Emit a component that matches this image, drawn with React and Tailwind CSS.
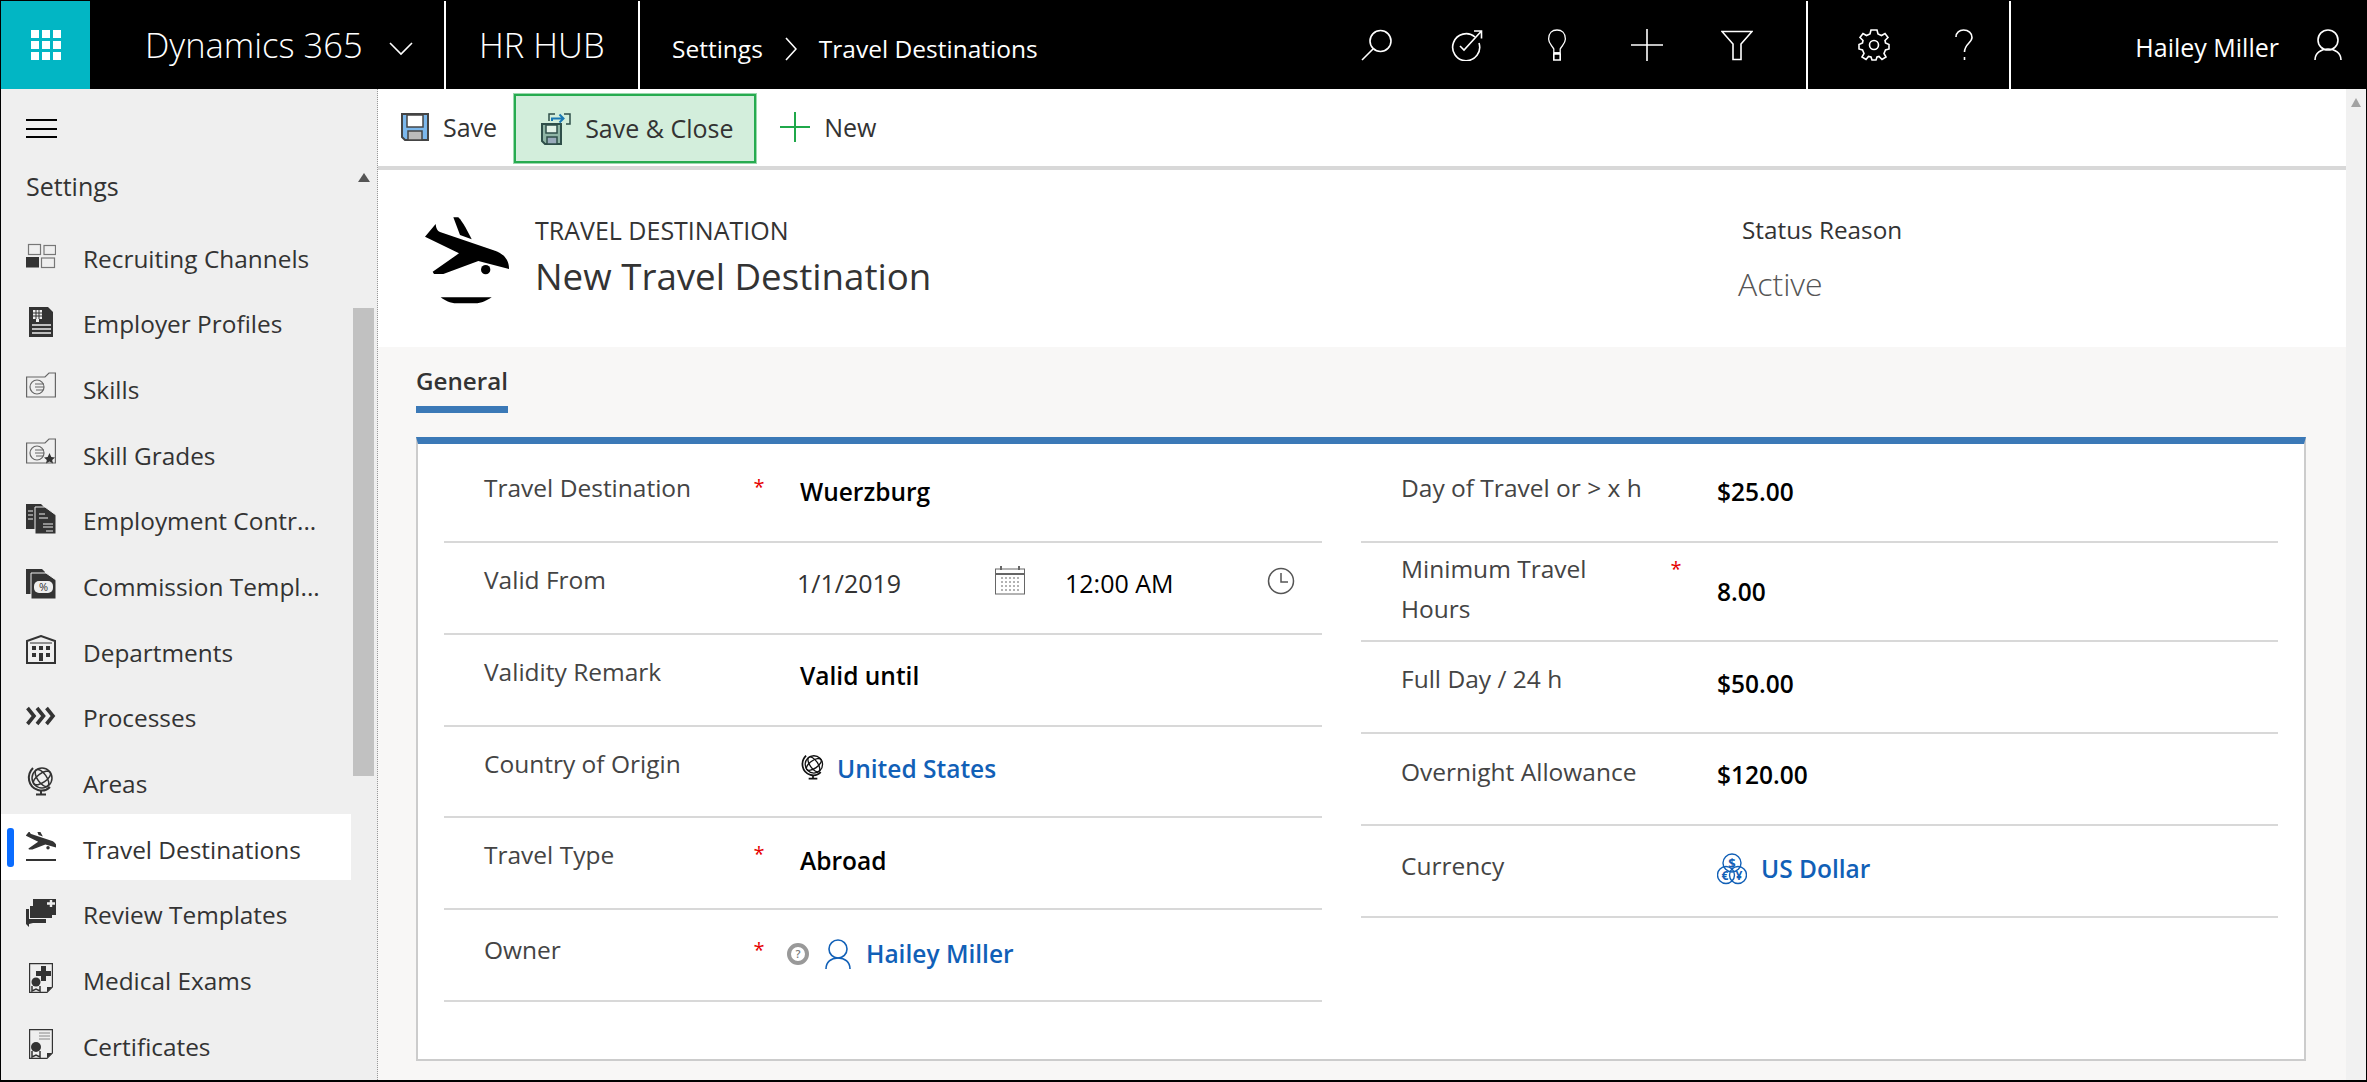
import React from 'react';

const font = { fontFamily: '"Open Sans", "Noto Sans", sans-serif' };

function PlaneShape() {
  return (
    <>
      <path d="M77 72 L45 110 L147 160 L68 215 L72 222 L100 222 L205 183 L297 207 C298 180 280 160 255 152 L90 96 C82 93 78 85 77 72 Z" />
      <path d="M130 52 L145 52 C160 68 172 92 185 118 L150 105 Z" />
      <circle cx="227" cy="209" r="14" />
    </>
  );
}

function Globe({ color = '#333', size = 30 }) {
  return (
    <svg width={size} height={size} viewBox="0 0 30 30" fill="none" stroke={color} strokeWidth="1.5" className="shrink-0">
      <circle cx="16" cy="12" r="10" />
      <ellipse cx="16" cy="12" rx="10" ry="4.5" transform="rotate(-35 16 12)" />
      <ellipse cx="16" cy="12" rx="4.5" ry="10" transform="rotate(-35 16 12)" />
      <path d="M7 2 C0 9 2 21 12 24 C17 25.5 21 24 24 21" strokeWidth="2" />
      <path d="M15 25 V28 M10 28.5 H20" strokeWidth="2" />
    </svg>
  );
}

function Box({ children }) {
  return (
    <svg width="30" height="30" viewBox="0 0 30 30" fill="none" className="shrink-0">
      {children}
    </svg>
  );
}

const navIcons = {
  recruiting: (
    <Box>
      <g stroke="#777" strokeWidth="1.2">
        <rect x="2.5" y="3.5" width="12" height="10" />
        <rect x="18" y="4.5" width="11.5" height="9" />
        <rect x="15.5" y="17" width="13" height="9.5" />
      </g>
      <rect x="0" y="16" width="13" height="10.5" fill="#333" />
    </Box>
  ),
  employer: (
    <Box>
      <path d="M3 0 H22 L27 5 V30 H3 Z" fill="#333" />
      <rect x="7" y="3" width="9" height="9" fill="#eee" />
      <path d="M10 3 V12 M13 3 V12 M7 6 H16 M7 9 H16" stroke="#333" />
      <rect x="10" y="12" width="3" height="3" fill="#eee" />
      <path d="M6 18 H25 M6 22 H25 M6 26 H25" stroke="#eee" strokeWidth="1.5" />
    </Box>
  ),
  skills: (
    <Box>
      <path d="M.6 5 H19 L23 1 H29.4 V25 H.6 Z" stroke="#666" strokeWidth="1.2" />
      <circle cx="11" cy="15" r="7" stroke="#666" strokeWidth="1.2" />
      <path d="M9 12 H18 M9 15 H18 M10 18 H17" stroke="#666" strokeWidth="1.2" />
    </Box>
  ),
  grades: (
    <Box>
      <path d="M.6 5 H19 L23 1 H29.4 V25 H.6 Z" stroke="#666" strokeWidth="1.2" />
      <circle cx="11" cy="15" r="7" stroke="#666" strokeWidth="1.2" />
      <path d="M9 12 H18 M9 15 H18 M10 18 H17" stroke="#666" strokeWidth="1.2" />
      <path d="M23.5 15 L25.3 19 L29 19.5 L26.2 22 L27 25.5 L23.5 23.6 L20 25.5 L20.8 22 L18 19.5 L21.7 19 Z" fill="#333" />
    </Box>
  ),
  contract: (
    <Box>
      <path d="M0 0 H15 L18 3 V25 H0 Z" fill="#333" />
      <path d="M2 7 H7 M2 11 H7 M2 15 H7" stroke="#eee" />
      <path d="M9 3 H19 L30 11 V30 H9 Z" fill="#333" stroke="#eee" />
      <path d="M13 10 H19 M13 14 H22 M17 20 H27 M17 23 H27 M20 27 H27" stroke="#eee" />
    </Box>
  ),
  commission: (
    <Box>
      <path d="M0 0 H16 L19 3 V25 H0 Z" fill="#333" />
      <path d="M5 4 H20 L30 11 V30 H5 Z" fill="#333" stroke="#eee" />
      <rect x="8" y="12" width="19" height="12" rx="5" fill="#eee" />
      <text x="17.5" y="22" textAnchor="middle" fontSize="11" fill="#333" style={font}>%</text>
    </Box>
  ),
  departments: (
    <Box>
      <path d="M1 28 V6 L15 1 L29 6 V28 Z" stroke="#333" strokeWidth="2" />
      <path d="M4 8 H26" stroke="#333" />
      <g fill="#333">
        <rect x="6" y="11" width="4" height="4" />
        <rect x="13" y="11" width="4" height="4" />
        <rect x="20" y="11" width="4" height="4" />
        <rect x="6" y="18" width="4" height="4" />
        <rect x="13" y="18" width="4" height="8" />
        <rect x="20" y="18" width="4" height="4" />
      </g>
    </Box>
  ),
  processes: (
    <Box>
      <path d="M1.5 7 L8 15 L1.5 23 M11 7 L17.5 15 L11 23 M20.5 7 L27 15 L20.5 23" stroke="#333" strokeWidth="3.6" />
    </Box>
  ),
  travel: (
    <svg width="30" height="30" viewBox="0 0 30 30" className="shrink-0">
      <svg x="-1" y="-5" width="32" height="32" viewBox="40 40 260 260" fill="#333">
        <PlaneShape />
      </svg>
      <rect x="0" y="27" width="30" height="2" fill="#333" />
    </svg>
  ),
  review: (
    <Box>
      <path d="M7 1 H30 V17 H26 V20 H4 L4 8 H7 Z" fill="#333" />
      <path d="M0 11 H3 V21 H20 V25 H7 L3 26 V29 L0 26 Z" fill="#333" />
      <path d="M24 1 H30 V7 H24 Z" fill="#333" />
      <path d="M25 2 V9 M21 5.5 H29" stroke="#eee" strokeWidth="2.4" />
    </Box>
  ),
  medical: (
    <Box>
      <path d="M3.6 .6 H26.4 V24 L21 29.4 H3.6 Z" stroke="#333" strokeWidth="1.2" />
      <path d="M21 29 L21 24 H26 Z" fill="#333" />
      <path d="M15 3 H20 V8 H25 V13 H20 V18 H15 V13 H10 V8 H15 Z" fill="#333" />
      <circle cx="10" cy="19" r="4.5" fill="#333" />
      <path d="M6 23 V28 L10 26 L14 28 V23" stroke="#333" strokeWidth="1.5" />
    </Box>
  ),
  certificate: (
    <Box>
      <path d="M3.6 .6 H26.4 V24 L21 29.4 H3.6 Z" stroke="#333" strokeWidth="1.2" />
      <path d="M21 29 L21 24 H26 Z" fill="#333" />
      <path d="M13 4 H24 M13 7 H24 M13 10 H24" stroke="#888" />
      <circle cx="10" cy="18" r="5" fill="#333" />
      <path d="M6 22 V28 L10 26 L14 28 V22" stroke="#333" strokeWidth="1.5" />
    </Box>
  ),
};

const navItems = [
  ['recruiting', 'Recruiting Channels'],
  ['employer', 'Employer Profiles'],
  ['skills', 'Skills'],
  ['grades', 'Skill Grades'],
  ['contract', 'Employment Contr...'],
  ['commission', 'Commission Templ...'],
  ['departments', 'Departments'],
  ['processes', 'Processes'],
  ['areas', 'Areas'],
  ['travel', 'Travel Destinations'],
  ['review', 'Review Templates'],
  ['medical', 'Medical Exams'],
  ['certificate', 'Certificates'],
];

function HeaderIcon({ children }) {
  return (
    <div className="flex w-[90px] h-[32px] items-center justify-center">
      <svg width="32" height="32" viewBox="0 0 32 32" fill="none" stroke="white" strokeWidth="1.6">
        {children}
      </svg>
    </div>
  );
}

function TopBar() {
  return (
    <header className="flex h-[88px] shrink-0 bg-black text-white">
      <div className="grid h-[88px] w-[89px] shrink-0 grid-cols-[8px_8px_8px] grid-rows-[8px_8px_8px] content-center justify-center gap-[3px] bg-[#02b6c4]">
        {[0, 1, 2, 3, 4, 5, 6, 7, 8].map((i) => (
          <span key={i} className="bg-white" />
        ))}
      </div>
      <div className="ml-[55px] flex items-center">
        <span className="w-[244px] text-[34.500px] font-light leading-none">Dynamics 365</span>
        <svg width="24" height="14" viewBox="0 0 24 14" fill="none" stroke="white" strokeWidth="1.6" className="mt-[8px]">
          <path d="M1 1 L12 12 L23 1" />
        </svg>
      </div>
      <div className="ml-[31px] h-full w-[2px] bg-white" />
      <span className="ml-[33px] w-[126px] self-center whitespace-nowrap text-[34.500px] font-light leading-none">HR HUB</span>
      <div className="ml-[33px] h-full w-[2px] bg-white" />
      <nav className="ml-[32px] mt-[8px] flex items-center text-[24.500px]">
        <span>Settings</span>
        <svg width="12" height="24" viewBox="0 0 12 24" fill="none" stroke="white" strokeWidth="1.6" className="mx-[22px]">
          <path d="M1 1 L11 12 L1 23" />
        </svg>
        <span>Travel Destinations</span>
      </nav>
      <div className="flex-1" />
      <div className="flex items-center">
        <HeaderIcon>
          <circle cx="19.5" cy="12" r="10.5" />
          <path d="M12 20 L1 31" />
        </HeaderIcon>
        <HeaderIcon>
          <path d="M24 8 A13.5 13.5 0 1 0 28 14" />
          <path d="M9 17 L13 21 L30 2.5 M23 2 H30.5 V9.5" />
        </HeaderIcon>
        <HeaderIcon>
          <path d="M12 24 V20 C9 16 5.500 14 5.500 10 C5.500 4 10 1 16 1 C22 1 26.500 4 26.500 10 C26.500 14 23 16 20 20 V24 Z" transform="translate(3.200 0) scale(0.8 1)" />
          <path d="M12.800 25 H19.200 V31 H12.800 Z M12.800 24 H19.200" />
        </HeaderIcon>
        <HeaderIcon>
          <path d="M16 0 V32 M0 16 H32" />
        </HeaderIcon>
        <HeaderIcon>
          <path d="M1 2.500 H31 L20 15 V30.500 H12 V15 Z" />
        </HeaderIcon>
      </div>
      <div className="ml-[24px] h-full w-[2px] bg-white" />
      <div className="ml-[21px] flex items-center">
        <HeaderIcon>
          <circle cx="16" cy="16" r="4.500" />
          <path d="M13 1 H19 L20 5 L23.500 6.500 L27 4.500 L30 8.500 L27 11.500 L27.500 14 L31 15.500 V20 L27.500 21 L26 24.500 L28 28 L24 30.500 L21 27.500 L19 28 L18 31 H14 L13 28 L10.500 27.500 L8 30.500 L4 28 L6 24.500 L4.500 21 L1 20 V15.500 L4.500 14 L5 11.500 L2 8.500 L5 4.500 L8.500 6.500 L12 5 Z" />
        </HeaderIcon>
        <HeaderIcon>
          <path d="M8 8 C8 3.500 11.500 1 15.500 1 C20.500 1 24 4 24 8.500 C24 13.500 16.500 15 16.500 23" />
          <path d="M16.500 28 V31" />
        </HeaderIcon>
      </div>
      <div className="h-full w-[2px] bg-white" />
      <div className="flex w-[355px] shrink-0 items-center justify-end">
        <span className="mt-[6px] text-[25px]">Hailey Miller</span>
        <svg width="28" height="32" viewBox="0 0 28 32" fill="none" stroke="white" strokeWidth="1.6" className="ml-[35px] mr-[24px]">
          <circle cx="14" cy="11" r="10" />
          <path d="M1 31 C1 24 7 20 14 20 C21 20 27 24 27 31" />
        </svg>
      </div>
    </header>
  );
}

function Sidebar() {
  return (
    <aside className="flex w-[377px] shrink-0 border-r border-dotted border-[#999] bg-[#efefef]">
      <div className="w-[350px] shrink-0">
        <div className="flex h-[134px] flex-col pl-[25px]">
          <div className="mt-[30px] flex w-[31px] flex-col gap-[6.500px]">
            <span className="h-[2px] bg-black" />
            <span className="h-[2px] bg-black" />
            <span className="h-[2px] bg-black" />
          </div>
          <span className="mt-[32px] text-[25px] font-medium leading-[32px] text-[#333]">Settings</span>
        </div>
        <ul>
          {navItems.map(([key, label]) => (
            <li
              key={key}
              className={`relative flex h-[65.700px] items-center gap-[27px] pl-[25px] text-[24.400px] text-[#333] ${key === 'travel' ? 'bg-white' : ''}`}
            >
              {key === 'travel' && (
                <span className="absolute left-[6px] top-[14px] h-[39px] w-[7px] rounded-[3px] bg-[#0a6cff]" />
              )}
              {key === 'areas' ? <Globe /> : navIcons[key]}
              <span className="mt-[6px] whitespace-nowrap">{label}</span>
            </li>
          ))}
        </ul>
      </div>
      <div className="flex w-[26px] flex-col pl-[2px] pr-[3px]">
        <div className="mt-[84px] h-0 w-0 self-center border-x-[6px] border-b-[9px] border-x-transparent border-b-[#555]" />
        <div className="mt-[126px] h-[468px] w-full bg-[#c1c1c1]" />
      </div>
    </aside>
  );
}

function Toolbar() {
  return (
    <div className="flex h-[81px] shrink-0 items-start border-b-4 border-[#d8d8d8] bg-white text-[25px] text-[#333]">
      <svg width="28" height="28" viewBox="0 0 28 28" className="ml-[23px] mt-[24px]">
        <path d="M1 1 H27 V27 H4 L1 24 Z" fill="#7cb8ec" stroke="#444" strokeWidth="2" />
        <rect x="6" y="2" width="16" height="12" fill="white" stroke="#444" strokeWidth="1.5" />
        <rect x="7" y="18" width="14" height="9" fill="#bbb" stroke="#444" strokeWidth="1.5" />
      </svg>
      <span className="ml-[14px] mt-[20px]">Save</span>
      <div className="ml-[17px] mt-[5px] flex h-[69px] w-[242px] shrink-0 items-center border-2 border-[#27ab50] bg-[#d3eedc] outline outline-1 outline-[#9bd8ae]">
        <svg width="30" height="32" viewBox="0 0 30 32" className="ml-[25px] shrink-0">
          <path d="M1 11 H20 V31 H4 L1 28 Z" fill="#8fb5a5" stroke="#2f4f4a" strokeWidth="2" />
          <rect x="5" y="12" width="11" height="8" fill="#e3f3e8" stroke="#2f4f4a" strokeWidth="1.500" />
          <rect x="6" y="24" width="10" height="7" fill="#9ab" stroke="#2f4f4a" strokeWidth="1.500" />
          <path d="M8 8 V1 H14 M23 1 H29 V11 H25" fill="none" stroke="#2f4f4a" strokeWidth="1.500" />
          <path d="M11 8 V5.500 H22 M18.500 1.500 L22.500 5.500 L18.500 9.500" fill="none" stroke="#1a78b4" strokeWidth="2" />
        </svg>
        <span className="ml-[14px] whitespace-nowrap">Save &amp; Close</span>
      </div>
      <svg width="30" height="30" viewBox="0 0 30 30" stroke="#1fa84a" strokeWidth="2" className="ml-[24px] mt-[23px]">
        <path d="M15 0 V30 M0 15 H30" />
      </svg>
      <span className="ml-[14px] mt-[20px]">New</span>
    </div>
  );
}

function FormHeader() {
  return (
    <div className="flex h-[177px] shrink-0 bg-white">
      <svg width="120" height="120" viewBox="0 0 360 360" fill="black" className="ml-[32px] mt-[30px] shrink-0">
        <PlaneShape />
        <path d="M92 292 H245 C230 302 215 310 195 310 H140 C120 310 105 302 92 292 Z" />
      </svg>
      <div className="ml-[5px] flex w-[1207px] flex-col text-[#333]">
        <span className="mt-[44px] text-[25px] leading-[32px]">TRAVEL DESTINATION</span>
        <span className="mt-[5px] text-[36.700px] leading-[50px]">New Travel Destination</span>
      </div>
      <div className="flex flex-col text-[#333]">
        <span className="mt-[44px] text-[24.300px] leading-[32px]">Status Reason</span>
        <span className="mt-[16px] -ml-[4px] text-[32px] font-light leading-[44px] text-[#555]">Active</span>
      </div>
    </div>
  );
}

function Asterisk({ className }) {
  return <span className={`w-[14px] shrink-0 text-center text-[20px] leading-[22px] text-[#e60000] ${className}`}>*</span>;
}

function Row({ label, required, value, valueX = 'ml-[34px]', h = 'h-[92px]', labelPt = 'pt-[17px]', valuePt = 'pt-[21px]', starPt = 'pt-[25px]', children }) {
  return (
    <div className={`flex ${h} items-start border-b-2 border-[#d8d8d8]`}>
      <span className={`ml-[40px] w-[268px] shrink-0 whitespace-nowrap text-[24.500px] leading-[40px] text-[#444] ${labelPt}`}>{label}</span>
      {required ? <Asterisk className={starPt} /> : <span className="w-[14px] shrink-0" />}
      <div className={`flex shrink-0 items-center text-[24.500px] font-semibold leading-[40px] text-black ${valueX} ${valuePt}`}>
        {children || value}
      </div>
    </div>
  );
}

function CurrencyIcon() {
  return (
    <svg width="30" height="32" viewBox="0 0 30 32" fill="none" stroke="#1160b7" strokeWidth="1.400" className="mr-[14px] shrink-0">
      <circle cx="15" cy="10" r="9" />
      <circle cx="9" cy="22" r="8.500" />
      <circle cx="21" cy="22" r="8.500" />
      <text x="15" y="15" textAnchor="middle" fontSize="13" fill="#1160b7" stroke="none" fontWeight="700" style={font}>$</text>
      <text x="8" y="27" textAnchor="middle" fontSize="12" fill="#1160b7" stroke="none" fontWeight="700" style={font}>€</text>
      <text x="22" y="27" textAnchor="middle" fontSize="12" fill="#1160b7" stroke="none" fontWeight="700" style={font}>¥</text>
    </svg>
  );
}

function FormCard() {
  return (
    <div className="ml-[38px] mr-[40px] mt-[24px] flex h-[624px] border-x-2 border-b-2 border-t-[7px] border-x-[#cccccc] border-b-[#cccccc] border-t-[#3b79b7] bg-white">
      <div className="ml-[26px] mt-[7px] w-[878px] shrink-0">
        <Row label="Travel Destination" required value="Wuerzburg" />
        <Row label="Valid From" valueX="ml-[31px]" valuePt="pt-[20px]">
          <span className="w-[198px] text-[25px] font-normal text-[#333]">1/1/2019</span>
          <svg width="30" height="30" viewBox="0 0 30 30" fill="none" stroke="#666" className="-mt-[6px] shrink-0">
            <rect x=".5" y="4" width="29" height="25" />
            <path d="M0 9 H30 M6 1 V5 M24 1 V5" strokeWidth="2" />
            <path d="M6 13 H24 M6 17 H24 M6 21 H24 M6 25 H24" strokeDasharray="2 2" />
          </svg>
          <span className="ml-[40px] w-[202px] text-[25px] font-normal text-black">12:00 AM</span>
          <svg width="28" height="28" viewBox="0 0 28 28" fill="none" stroke="#555" strokeWidth="1.500" className="-mt-[4px] shrink-0">
            <circle cx="14" cy="14" r="12.500" />
            <path d="M14 6 V15 H21" />
          </svg>
        </Row>
        <Row label="Validity Remark" value="Valid until" />
        <Row label="Country of Origin" h="h-[91px]" valuePt="pt-[22px]">
          <span className="mr-[11px] -mt-[4px]"><Globe color="#111" size={26} /></span>
          <span className="text-[#1160b7]">United States</span>
        </Row>
        <Row label="Travel Type" required value="Abroad" valuePt="pt-[23px]" />
        <Row label="Owner" required valueX="ml-[21px]" labelPt="pt-[20px]" valuePt="pt-[24px]" starPt="pt-[29px]">
          <svg width="22" height="22" viewBox="0 0 22 22" className="shrink-0">
            <circle cx="11" cy="11" r="9" fill="white" stroke="#999" strokeWidth="4" />
            <text x="11" y="15" textAnchor="middle" fontSize="11" fill="#777" style={font}>?</text>
          </svg>
          <svg width="28" height="30" viewBox="0 0 28 30" fill="none" stroke="#1160b7" strokeWidth="1.600" className="ml-[15px] shrink-0">
            <circle cx="14" cy="10" r="9" />
            <path d="M2 30 C2 23 7 19 14 19 C21 19 26 23 26 30" />
          </svg>
          <span className="ml-[14px] text-[#1160b7]">Hailey Miller</span>
        </Row>
      </div>
      <div className="ml-[39px] mt-[7px] w-[917px] shrink-0">
        <Row label="Day of Travel or > x h" value="$25.00" />
        <Row
          label={<>Minimum Travel<br />Hours</>}
          required
          value="8.00"
          h="h-[99px]"
          labelPt="pt-[6px]"
          valuePt="pt-[29px]"
          starPt="pt-[15px]"
        />
        <Row label="Full Day / 24 h" value="$50.00" valuePt="pt-[22px]" />
        <Row label="Overnight Allowance" value="$120.00" labelPt="pt-[18px]" />
        <Row label="Currency" labelPt="pt-[20px]" valuePt="pt-[23px]">
          <CurrencyIcon />
          <span className="text-[#1160b7]">US Dollar</span>
        </Row>
      </div>
    </div>
  );
}

export default function App() {
  return (
    <div className="flex h-[1082px] w-[2367px] flex-col overflow-hidden border border-b-2 border-black bg-white" style={font}>
      <TopBar />
      <div className="flex min-h-0 flex-1">
        <Sidebar />
        <main className="flex min-w-0 flex-1 flex-col">
          <Toolbar />
          <FormHeader />
          <div className="flex-1 bg-[#f8f7f6]">
            <div className="ml-[38px] mt-[17px] inline-block border-b-[7px] border-[#3b79b7] pb-[8px] text-[24.200px] font-semibold leading-[34px] text-[#333]">
              General
            </div>
            <FormCard />
          </div>
        </main>
        <div className="flex w-[20px] shrink-0 justify-center bg-[#f1f1f1] pt-[9px]">
          <div className="h-0 w-0 border-x-[5px] border-b-[9px] border-x-transparent border-b-[#a3a3a3]" />
        </div>
      </div>
    </div>
  );
}
